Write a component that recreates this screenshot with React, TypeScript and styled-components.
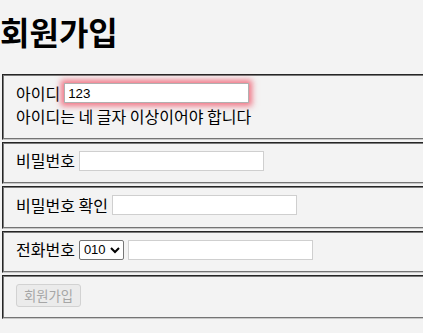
import React, { useState } from 'react'
import styled, { createGlobalStyle, css } from 'styled-components'

const GlobalStyle = createGlobalStyle`
  html, body {
    margin: 0;
    background: #f3f3f3;
    overflow: hidden;
  }
  body {
    font-family: "Noto Sans CJK KR", "Noto Sans", sans-serif;
    color: #000;
  }
`

const Page = styled.div`
  width: 480px;
`

const Title = styled.h1`
  margin: 9px 0 21px 0;
  font-size: 32px;
  font-weight: 700;
  line-height: 44px;
`

const Form = styled.form`
  display: flex;
  flex-direction: column;
  gap: 2px;
`

const Group = styled.fieldset`
  margin: 0 2px;
  padding: 5.6px 12px 10px 12px;
  border: 2px groove #c0c0c0;
  border-color: #7a7a7a #c8c8c8 #c8c8c8 #7a7a7a;
  border-style: groove;
  font-size: 16px;
  line-height: 23px;
`

const Row = styled.div`
  display: flex;
  align-items: center;
  gap: 4px;
  min-height: 23px;
`

const TextInput = styled.input<{ $invalid?: boolean }>`
  box-sizing: border-box;
  width: 185px;
  height: 20px;
  padding: 1px 3px;
  border: 1px solid #cfcfcf;
  background: #fff;
  font-family: "Liberation Sans", Arial, sans-serif;
  font-size: 13.33px;
  color: #000;
  outline: none;
  ${(props) =>
    props.$invalid &&
    css`
      border-color: #b0b0b0;
      box-shadow: 0 0 6px 3px rgba(240, 85, 105, 0.8);
    `}
`

const Select = styled.select`
  box-sizing: border-box;
  height: 20px;
  width: 45px;
  padding: 0;
  border: 1px solid #767676;
  border-radius: 2px;
  background: #fff;
  font-family: "Liberation Sans", Arial, sans-serif;
  font-size: 13px;
  color: #000;
`

const Hint = styled.div`
  line-height: 23px;
`

const SubmitButton = styled.button`
  box-sizing: border-box;
  height: 23px;
  padding: 0 7px;
  border: 1px solid #d2d2d2;
  border-radius: 3px;
  background: #ebebeb;
  color: #a6a6a6;
  font-family: "Noto Sans CJK KR", sans-serif;
  font-size: 13.33px;
`

const App = () => {
  const [id, setId] = useState('123')

  return (
    <Page>
      <GlobalStyle />
      <Title>회원가입</Title>
      <Form onSubmit={(e) => e.preventDefault()}>
        <Group>
          <Row>
            아이디
            <TextInput $invalid value={id} onChange={(e) => setId(e.target.value)} />
          </Row>
          <Hint>아이디는 네 글자 이상이어야 합니다</Hint>
        </Group>
        <Group>
          <Row>
            비밀번호
            <TextInput type="password" />
          </Row>
        </Group>
        <Group>
          <Row>
            비밀번호 확인
            <TextInput type="password" />
          </Row>
        </Group>
        <Group>
          <Row>
            전화번호
            <Select defaultValue="010">
              <option value="010">010</option>
              <option value="011">011</option>
              <option value="016">016</option>
            </Select>
            <TextInput />
          </Row>
        </Group>
        <Group>
          <SubmitButton disabled>회원가입</SubmitButton>
        </Group>
      </Form>
    </Page>
  )
}

export default App
